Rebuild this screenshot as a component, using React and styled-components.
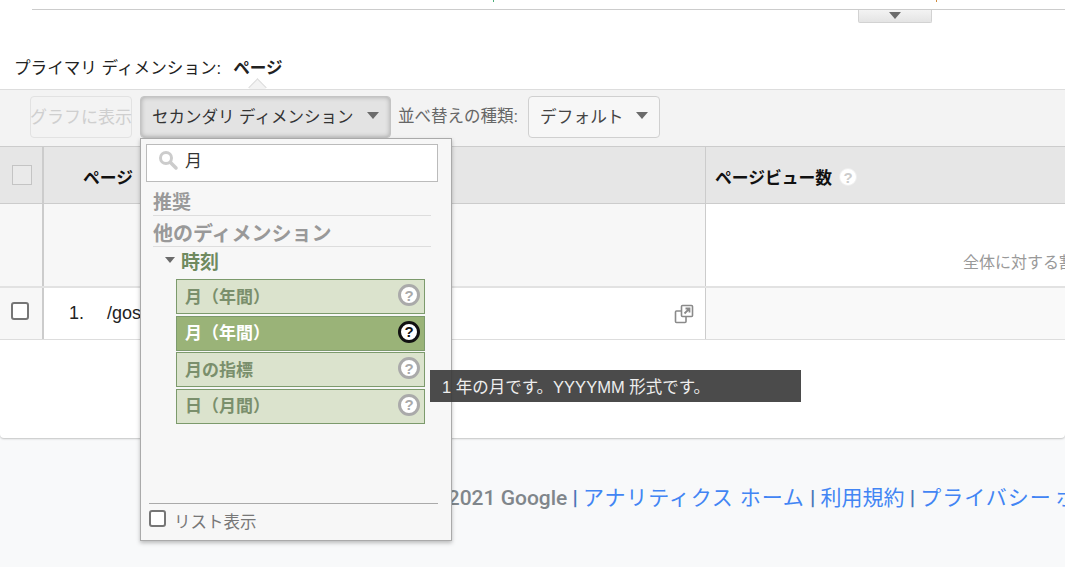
import styled, { createGlobalStyle } from "styled-components";

const GlobalStyle = createGlobalStyle`
  html, body {
    margin: 0;
    padding: 0;
    background: #f8f9fa;
    font-family: "Liberation Sans", "Noto Sans CJK JP", sans-serif;
  }
  * { box-sizing: border-box; }
`;

const Page = styled.div`
  position: relative;
  width: 1065px;
  height: 567px;
  overflow: hidden;
  background: #f8f9fa;
`;

const Card = styled.div`
  height: 438px;
  background: #fff;
  border-radius: 0 0 4px 4px;
  box-shadow: 0 1px 2px rgba(0, 0, 0, 0.22);
  overflow: hidden;
`;

const ChartEdge = styled.div`
  height: 10px;
  margin-left: 32px;
  border-bottom: 1px solid #ccc;
`;

const ChartSvg = styled.svg`
  display: block;
`;

const HandleRow = styled.div`
  display: flex;
  justify-content: flex-end;
  padding-right: 133px;
  height: 13px;
`;

const Handle = styled.div`
  width: 74px;
  height: 13px;
  display: flex;
  justify-content: center;
  padding-top: 2px;
  background: linear-gradient(#f3f3f3, #e4e4e4);
  border: 1px solid #d2d2d2;
  border-top: none;
  border-radius: 0 0 2px 2px;
`;

const Caret = styled.span`
  display: block;
  flex: none;
  width: 0;
  height: 0;
  border-left: ${(p) => p.$size || 6}px solid transparent;
  border-right: ${(p) => p.$size || 6}px solid transparent;
  border-top: ${(p) => (p.$size || 6) + 1}px solid #6b6b6b;
`;

const PrimaryRow = styled.div`
  position: relative;
  height: 66px;
  padding: 34px 0 0 14px;
  display: flex;
  gap: 12px;
  font-size: 16.6px;
  line-height: 24px;
  color: #222;
  white-space: nowrap;
`;

const PrimaryValue = styled.b`
  font-weight: 700;
`;

const Notch = styled.span`
  position: absolute;
  left: 251px;
  bottom: -5px;
  width: 13px;
  height: 13px;
  background: #f3f3f3;
  border-left: 1px solid #ddd;
  border-top: 1px solid #ddd;
  transform: rotate(45deg);
`;

const Toolbar = styled.div`
  position: relative;
  height: 58px;
  padding: 6px 0 0 30px;
  display: flex;
  align-items: flex-start;
  background: #f3f3f3;
  border-top: 1px solid #ddd;
  border-bottom: 1px solid #ccc;
`;

const ChartButton = styled.div`
  width: 102px;
  height: 42px;
  padding-bottom: 3px;
  display: flex;
  align-items: center;
  justify-content: center;
  font-size: 17px;
  color: #cfcfcf;
  white-space: nowrap;
  border: 1px solid #e2e2e2;
  border-radius: 4px;
`;

const SecondaryButton = styled.div`
  width: 251px;
  height: 42px;
  margin-left: 8px;
  padding: 0 11px 3px 11px;
  display: flex;
  align-items: center;
  justify-content: space-between;
  font-size: 16.5px;
  color: #333;
  white-space: nowrap;
  background: #e3e3e3;
  border: 1px solid #c4c4c4;
  border-radius: 4px;
  box-shadow: inset 0 0 5px rgba(0, 0, 0, 0.28);
`;

const SortLabel = styled.span`
  margin: 0 10px 0 7px;
  line-height: 40px;
  font-size: 16.5px;
  color: #666;
  white-space: nowrap;
`;

const SortButton = styled.div`
  width: 132px;
  height: 42px;
  padding: 0 11px 3px 11px;
  display: flex;
  align-items: center;
  justify-content: space-between;
  font-size: 16.7px;
  color: #444;
  white-space: nowrap;
  background: #f7f7f7;
  border: 1px solid #d0d0d0;
  border-radius: 4px;
`;

const TableRow = styled.div`
  display: grid;
  grid-template-columns: 44px 662px 359px;
  height: ${(p) => p.$height}px;
  border-bottom: ${(p) => p.$line || "1px solid #ddd"};
`;

const HeadCell = styled.div`
  display: flex;
  align-items: center;
  gap: 7px;
  padding-left: ${(p) => p.$pad || 0}px;
  padding-top: 4px;
  font-size: 16.8px;
  font-weight: 700;
  color: #111;
  white-space: nowrap;
  background: #e6e6e6;
  border-right: ${(p) => p.$line || "none"};
`;

const CheckCell = styled.div`
  display: flex;
  align-items: center;
  justify-content: center;
  padding: ${(p) => p.$pad || 0};
  background: ${(p) => p.$bg};
  border-right: 2px solid #ccc;
`;

const HeadCheck = styled.span`
  display: block;
  width: 20px;
  height: 20px;
  background: #eaeaea;
  border: 1px solid #c4c4c4;
`;

const RowCheck = styled.span`
  display: block;
  flex: none;
  width: ${(p) => p.$size || 18}px;
  height: ${(p) => p.$size || 18}px;
  background: #fff;
  border: 2px solid #767676;
  border-radius: 3px;
`;

const TotalLeft = styled.div`
  background: #f7f7f7;
  border-right: 1px solid #ccc;
`;

const TotalRight = styled.div`
  padding: 47px 0 0 257px;
  font-size: 16px;
  line-height: 24px;
  color: #999;
  white-space: nowrap;
  overflow: hidden;
`;

const PageCell = styled.div`
  display: flex;
  align-items: center;
  padding: 0 11px 0 25px;
  font-size: 18px;
  color: #222;
  white-space: nowrap;
  border-right: 1px solid #ccc;
`;

const RowIndex = styled.span`
  width: 38px;
`;

const PagePath = styled.span`
  flex: 1;
`;

const MetricCell = styled.div`
  background: #f9f9f9;
`;

const Footer = styled.div`
  padding: 47px 0 0 426px;
  font-size: 21px;
  line-height: 26px;
  font-family: Roboto, "Noto Sans CJK JP", sans-serif;
  font-weight: 500;
  color: #80868b;
  white-space: nowrap;
  overflow: hidden;
`;

const FooterLink = styled.span`
  font-weight: 400;
  color: #4285f4;
  letter-spacing: ${(p) => p.$spread || 0}px;
  word-spacing: ${(p) => p.$gap || 0}px;
`;

const FooterSep = styled.span`
  font-weight: 700;
  color: #4a76b8;
`;

const Menu = styled.div`
  position: absolute;
  left: 140px;
  top: 138px;
  width: 312px;
  height: 403px;
  padding: 5px 13px 0 5px;
  display: flex;
  flex-direction: column;
  background: #f7f7f7;
  border: 1px solid #aaa;
  box-shadow: 0 2px 4px rgba(0, 0, 0, 0.25);
`;

const SearchBox = styled.div`
  flex: none;
  width: 292px;
  height: 38px;
  padding: 0 0 7px 10px;
  display: flex;
  align-items: center;
  gap: 6px;
  font-size: 17px;
  color: #333;
  background: #fff;
  border: 1px solid #bbb;
`;

const MenuHeading = styled.div`
  flex: none;
  width: 278px;
  height: ${(p) => p.$height}px;
  margin-left: 7px;
  font-size: ${(p) => p.$size}px;
  font-weight: 700;
  line-height: 24px;
  color: #999;
  white-space: nowrap;
  border-bottom: 1px solid #ddd;
  padding-top: ${(p) => p.$top}px;
`;

const GroupRow = styled.div`
  flex: none;
  display: flex;
  align-items: center;
  gap: 6px;
  height: 32px;
  padding-bottom: 6px;
  margin-left: 19px;
  font-size: 19px;
  font-weight: 700;
  color: #6f8a5f;
`;

const ItemList = styled.div`
  display: flex;
  flex-direction: column;
  gap: 1.67px;
  width: 249px;
  margin-left: 30px;
`;

const Item = styled.div`
  height: 35px;
  padding: 0 4px 3px 8px;
  display: flex;
  align-items: center;
  justify-content: space-between;
  font-size: 17px;
  font-weight: 700;
  color: ${(p) => (p.$active ? "#fff" : "#7a8f6c")};
  background: ${(p) => (p.$active ? "#9ab378" : "#dbe3cd")};
  border: 1px solid #7c9a6c;
`;

const Help = styled.span`
  flex: none;
  width: ${(p) => p.$size || 22}px;
  height: ${(p) => p.$size || 22}px;
  display: flex;
  align-items: center;
  justify-content: center;
  font-family: "Liberation Sans", sans-serif;
  font-size: 15px;
  font-weight: 700;
  color: ${(p) => (p.$active ? "#111" : "#aaa")};
  background: #fff;
  border: 3px solid ${(p) => (p.$active ? "#111" : "#aaa")};
  border-radius: 50%;
`;

const HeadHelp = styled(Help)`
  color: #ccc;
  border: 1px solid #eee;
`;

const MenuSpacer = styled.div`
  flex: 1;
`;

const ListToggle = styled.div`
  height: 37px;
  margin-left: 3px;
  padding-top: 6px;
  display: flex;
  align-items: flex-start;
  gap: 8px;
  font-size: 16.5px;
  line-height: 24px;
  color: #777;
  border-top: 1px solid #aaa;
`;

const Tooltip = styled.div`
  position: absolute;
  left: 430px;
  top: 370px;
  width: 371px;
  height: 32px;
  padding-left: 12px;
  display: flex;
  align-items: center;
  font-size: 16.5px;
  color: #eee;
  white-space: nowrap;
  background: rgba(60, 60, 60, 0.92);
`;

const SearchIcon = () => (
  <svg width="22" height="22" viewBox="0 0 22 22" fill="none">
    <circle cx="9" cy="9" r="5.5" stroke="#ccc" strokeWidth="3" />
    <path d="M13.5 13.5 L19 19" stroke="#ccc" strokeWidth="3.5" strokeLinecap="round" />
  </svg>
);

const PopoutIcon = () => (
  <svg width="20" height="20" viewBox="0 0 20 20" fill="none">
    <rect x="7.5" y="1.5" width="11" height="11" rx="1" stroke="#8a8a8a" strokeWidth="1.6" />
    <path d="M7 7 H2.5 a1 1 0 0 0 -1 1 V17.5 a1 1 0 0 0 1 1 H11 a1 1 0 0 0 1 -1 V13" stroke="#8a8a8a" strokeWidth="1.6" />
    <path d="M10.5 9.5 L15 5 M11.5 4.5 H15.5 V8.5" stroke="#8a8a8a" strokeWidth="1.8" />
  </svg>
);

const items = [
  { label: "月（年間）" },
  { label: "月（年間）", active: true },
  { label: "月の指標" },
  { label: "日（月間）" },
];

export default function App() {
  return (
    <Page>
      <GlobalStyle />
      <Card>
        <ChartEdge>
          <ChartSvg width="1033" height="2">
            <rect x="461" y="0" width="1" height="2" fill="#4caf7a" />
            <rect x="904" y="0" width="1" height="2" fill="#d08a3c" />
          </ChartSvg>
        </ChartEdge>
        <HandleRow>
          <Handle>
            <Caret $size={6} />
          </Handle>
        </HandleRow>
        <PrimaryRow>
          <span>プライマリ ディメンション:</span>
          <PrimaryValue>ページ</PrimaryValue>
          <Notch />
        </PrimaryRow>
        <Toolbar>
          <ChartButton>グラフに表示</ChartButton>
          <SecondaryButton>
            セカンダリ ディメンション
            <Caret />
          </SecondaryButton>
          <SortLabel>並べ替えの種類:</SortLabel>
          <SortButton>
            デフォルト
            <Caret />
          </SortButton>
        </Toolbar>
        <TableRow $height={57} $line="1px solid #ccc">
          <CheckCell $bg="#e6e6e6" $pad="0 0 0 1px">
            <HeadCheck />
          </CheckCell>
          <HeadCell $pad={39} $line="1px solid #ccc">ページ</HeadCell>
          <HeadCell $pad={9}>
            ページビュー数
            <HeadHelp $size={18}>?</HeadHelp>
          </HeadCell>
        </TableRow>
        <TableRow $height={84} $line="2px solid #e2e2e2">
          <CheckCell $bg="#f7f7f7" />
          <TotalLeft />
          <TotalRight>全体に対する割合: 100.00%</TotalRight>
        </TableRow>
        <TableRow $height={52}>
          <CheckCell $bg="#f7f7f7" $pad="0 2px 6px 0">
            <RowCheck />
          </CheckCell>
          <PageCell>
            <RowIndex>1.</RowIndex>
            <PagePath>/gosui-kanri</PagePath>
            <PopoutIcon />
          </PageCell>
          <MetricCell />
        </TableRow>
      </Card>
      <Footer>
        © 2021 Google <FooterSep>|</FooterSep> <FooterLink $spread={0.85}>アナリティクス ホーム</FooterLink> <FooterSep>|</FooterSep> <FooterLink>利用規約</FooterLink> <FooterSep>|</FooterSep> <FooterLink $spread={1} $gap={-2}>プライバシー ポリシー</FooterLink>
      </Footer>
      <Menu>
        <SearchBox>
          <SearchIcon />
          月
        </SearchBox>
        <MenuHeading $size={19} $height={34} $top={9}>推奨</MenuHeading>
        <MenuHeading $size={20} $height={31} $top={6}>他のディメンション</MenuHeading>
        <GroupRow>
          <Caret $size={5} />
          時刻
        </GroupRow>
        <ItemList>
          {items.map((item, i) => (
            <Item key={i} $active={item.active}>
              {item.label}
              <Help $active={item.active}>?</Help>
            </Item>
          ))}
        </ItemList>
        <MenuSpacer />
        <ListToggle>
          <RowCheck $size={17} />
          リスト表示
        </ListToggle>
      </Menu>
      <Tooltip>1 年の月です。YYYYMM 形式です。</Tooltip>
    </Page>
  );
}
